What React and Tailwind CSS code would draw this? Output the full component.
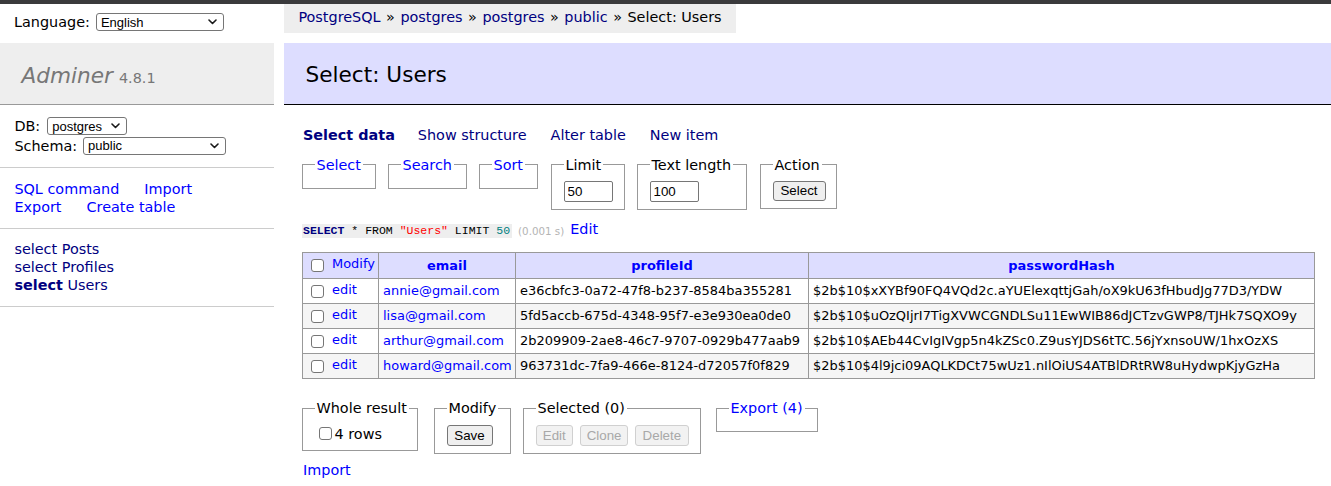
import React from "react";

const Chevron = () => (
  <svg width="9" height="6" viewBox="0 0 9 6" className="shrink-0">
    <path d="M1 1l3.5 3.5L8 1" fill="none" stroke="#1a1a1a" strokeWidth="1.6" strokeLinecap="round" strokeLinejoin="round" />
  </svg>
);

function FakeSelect({ w, value }) {
  return (
    <span
      className={`inline-flex items-center justify-between h-[18px] border border-[#767676] rounded-[3px] bg-white pl-[4px] pr-[6px] text-[13px] leading-none font-['Liberation_Sans',Arial,sans-serif] text-black align-middle ${w}`}
    >
      <span>{value}</span>
      <Chevron />
    </span>
  );
}

const Box = ({ className = "" }) => (
  <span className={`inline-block shrink-0 w-[13px] h-[13px] border border-[#767676] rounded-[3px] bg-white ${className}`} />
);

function FS({ legend, w, className = "", children }) {
  return (
    <fieldset className={`min-w-0 border border-[#999] px-[11.5px] pt-[7px] pb-[7px] ${w} ${className}`}>
      <legend className="px-[2px] leading-[18px] whitespace-nowrap">{legend}</legend>
      {children}
    </fieldset>
  );
}

const Btn = ({ w, h = "h-[20px]", children, disabled }) => (
  <button
    disabled={disabled}
    className={`${w} ${h} ${
      disabled ? "border-[#d0d0d0] bg-[#f2f2f2] text-[#a8a8a8]" : "border-[#767676] bg-[#efefef] text-black"
    } border rounded-[3px] text-[13.33px] leading-none font-['Liberation_Sans',Arial,sans-serif]`}
  >
    {children}
  </button>
);

const TextInput = ({ value }) => (
  <input
    readOnly
    defaultValue={value}
    className="w-[49px] h-[21px] border border-[#767676] rounded-[2px] bg-white pl-[3px] text-[13.33px] font-['Liberation_Sans',Arial,sans-serif] text-black outline-none"
  />
);

const rows = [
  ["annie@gmail.com", "e36cbfc3-0a72-47f8-b237-8584ba355281", "$2b$10$xXYBf90FQ4VQd2c.aYUElexqttjGah/oX9kU63fHbudJg77D3/YDW"],
  ["lisa@gmail.com", "5fd5accb-675d-4348-95f7-e3e930ea0de0", "$2b$10$uOzQIjrI7TigXVWCGNDLSu11EwWIB86dJCTzvGWP8/TJHk7SQXO9y"],
  ["arthur@gmail.com", "2b209909-2ae8-46c7-9707-0929b477aab9", "$2b$10$AEb44CvIgIVgp5n4kZSc0.Z9usYJDS6tTC.56jYxnsoUW/1hxOzXS"],
  ["howard@gmail.com", "963731dc-7fa9-466e-8124-d72057f0f829", "$2b$10$4l9jci09AQLKDCt75wUz1.nIlOiUS4ATBlDRtRW8uHydwpKjyGzHa"],
];

export default function App() {
  return (
    <div className="w-[1331px] min-h-[486px] bg-white text-black font-['DejaVu_Sans',Verdana,sans-serif] text-[14.4px] leading-[18px]">
      <div className="h-[4px] bg-[#3a3a3c]" />
      <div className="flex">
        {/* Sidebar */}
        <aside className="w-[274px] shrink-0">
          <div className="h-[36px] px-[14px] flex items-center gap-[6px]">
            <span>Language:</span>
            <FakeSelect w="w-[128px]" value="English" />
          </div>
          <h1 className="mt-[3px] h-[62px] bg-[#eee] border-b border-[#999] px-[21.6px] pt-[4px] flex items-center text-[#777]">
            <span className="italic text-[21.6px] leading-[27px]">Adminer</span>
            <span className="ml-[6px] text-[14.4px] mt-[4px]">4.8.1</span>
          </h1>
          <div className="px-[14.4px] pt-[11.5px] pb-[11.5px] border-b border-[#ccc]">
            <div className="h-[19.5px] flex items-center gap-[7px]">
              <span>DB:</span>
              <FakeSelect w="w-[80px]" value="postgres" />
            </div>
            <div className="h-[19.5px] flex items-center gap-[6px]">
              <span>Schema:</span>
              <FakeSelect w="w-[143px]" value="public" />
            </div>
          </div>
          <div className="px-[14.4px] pt-[12px] pb-[11.5px] border-b border-[#ccc] text-[#0000ff]">
            <div className="flex">
              <a className="mr-[25px]">SQL command</a>
              <a>Import</a>
            </div>
            <div className="flex">
              <a className="mr-[25px]">Export</a>
              <a>Create table</a>
            </div>
          </div>
          <div className="px-[14.4px] pt-[11px] pb-[12px] border-b border-[#ccc] text-[#000080]">
            <div>
              <a>select</a> <a>Posts</a>
            </div>
            <div>
              <a>select</a> <a>Profiles</a>
            </div>
            <div>
              <a className="font-bold">select</a> <a>Users</a>
            </div>
          </div>
        </aside>

        {/* Main */}
        <main className="flex-1 ml-[10px] min-w-0">
          <div className="inline-flex items-center h-[29px] bg-[#eee] px-[14.4px] pb-[3px] whitespace-nowrap">
            <a className="text-[#000080]">PostgreSQL</a>
            <span className="mx-[5.5px]">»</span>
            <a className="text-[#000080]">postgres</a>
            <span className="mx-[5.5px]">»</span>
            <a className="text-[#000080]">postgres</a>
            <span className="mx-[5.5px]">»</span>
            <a className="text-[#000080]">public</a>
            <span className="mx-[5.5px]">»</span>
            <span>Select: Users</span>
          </div>
          <h2 className="mt-[10px] h-[62px] bg-[#ddf] border-b border-black px-[21.6px] pt-[2px] flex items-center text-[21.6px] leading-[27px] font-normal">
            Select: Users
          </h2>

          <div className="pl-[18px]">
            {/* nav links */}
            <div className="mt-[21px] flex text-[#000080] whitespace-nowrap pl-[1px]">
              <a className="font-bold mr-[23px]">Select data</a>
              <a className="mr-[24px]">Show structure</a>
              <a className="mr-[24px]">Alter table</a>
              <a>New item</a>
            </div>

            {/* top fieldsets */}
            <div className="mt-[11.5px] flex items-start">
              <FS w="w-[74px]" legend={<a className="text-[#0000ff]">Select</a>} />
              <FS w="w-[79px]" className="ml-[12px]" legend={<a className="text-[#0000ff]">Search</a>} />
              <FS w="w-[59px]" className="ml-[12px]" legend={<a className="text-[#0000ff]">Sort</a>} />
              <FS w="w-[74px]" className="ml-[13px]" legend="Limit">
                <TextInput value="50" />
              </FS>
              <FS w="w-[110px]" className="ml-[12px]" legend="Text length">
                <TextInput value="100" />
              </FS>
              <FS w="w-[77px]" className="ml-[13px]" legend="Action">
                <Btn w="w-[53px]">Select</Btn>
              </FS>
            </div>

            {/* SQL line */}
            <div className="mt-[10.5px] flex items-center h-[18px] whitespace-nowrap">
              <code className="bg-[#eee] font-['Liberation_Mono','Courier_New',monospace] text-[11.5px] leading-[14px] text-black pl-[1px] pr-[2px] mt-[4px]">
                <span className="font-bold text-[#000080]">SELECT</span> * FROM{" "}
                <span className="text-[#ff0000]">"Users"</span> LIMIT{" "}
                <span className="text-[#008080]">50</span>
              </code>
              <span className="ml-[6px] mt-[4px] text-[10.3px] text-[#b4b4b4]">(0.001 s)</span>
              <a className="ml-[6px] text-[#0000ff]">Edit</a>
            </div>

            {/* Table */}
            <table className="mt-[14px] border-collapse table-fixed w-[1012px] text-[12.96px] leading-[16px]">
              <colgroup>
                <col className="w-[76px]" />
                <col className="w-[137px]" />
                <col className="w-[293px]" />
                <col className="w-[506px]" />
              </colgroup>
              <thead>
                <tr className="h-[26px] bg-[#ddf]">
                  <td className="border border-[#999] pl-[4px] pr-[3px]">
                    <div className="flex items-center">
                      <Box className="ml-[4px] mr-[8px]" />
                      <a className="text-[#0000ff] mb-[3px]">Modify</a>
                    </div>
                  </td>
                  <th className="border border-[#999] px-[7px] text-center font-bold text-[#0000ff]">email</th>
                  <th className="border border-[#999] px-[7px] text-center font-bold text-[#0000ff]">profileId</th>
                  <th className="border border-[#999] px-[7px] text-center font-bold text-[#0000ff]">passwordHash</th>
                </tr>
              </thead>
              <tbody>
                {rows.map((r, i) => (
                  <tr key={i} className={`h-[25px] ${i % 2 === 1 ? "bg-[#f5f5f5]" : "bg-white"}`}>
                    <td className="border border-[#999] pl-[4px] pr-[3px]">
                      <div className="flex items-center">
                        <Box className="ml-[4px] mr-[8px]" />
                        <a className="text-[#0000ff] mb-[3px]">edit</a>
                      </div>
                    </td>
                    <td className="border border-[#999] px-[4px] whitespace-nowrap overflow-hidden">
                      <a className="text-[#0000ff]">{r[0]}</a>
                    </td>
                    <td className="border border-[#999] px-[4px] whitespace-nowrap overflow-hidden">{r[1]}</td>
                    <td className="border border-[#999] px-[4px] whitespace-nowrap overflow-hidden">{r[2]}</td>
                  </tr>
                ))}
              </tbody>
            </table>

            {/* Footer fieldsets */}
            <div className="mt-[20px] flex items-start">
              <FS w="w-[116px]" legend="Whole result">
                <label className="flex items-center h-[19px]">
                  <Box className="ml-[4px] mr-[3px]" />
                  <span>4 rows</span>
                </label>
              </FS>
              <FS w="w-[77px]" className="ml-[16px]" legend="Modify">
                <div className="pt-[1px]">
                  <Btn w="w-[46px]" h="h-[21px]">Save</Btn>
                </div>
              </FS>
              <FS w="w-[178px]" className="ml-[12px]" legend="Selected (0)">
                <div className="pt-[1px] flex gap-[7px]">
                  <Btn w="w-[38px]" h="h-[21px]" disabled>Edit</Btn>
                  <Btn w="w-[49px]" h="h-[21px]" disabled>Clone</Btn>
                  <Btn w="w-[54px]" h="h-[21px]" disabled>Delete</Btn>
                </div>
              </FS>
              <FS w="w-[102px]" className="ml-[15px]" legend={<a className="text-[#0000ff]">Export (4)</a>} />
            </div>

            <div className="mt-[7px] pl-[1px]">
              <a className="text-[#0000ff]">Import</a>
            </div>
          </div>
        </main>
      </div>
    </div>
  );
}
